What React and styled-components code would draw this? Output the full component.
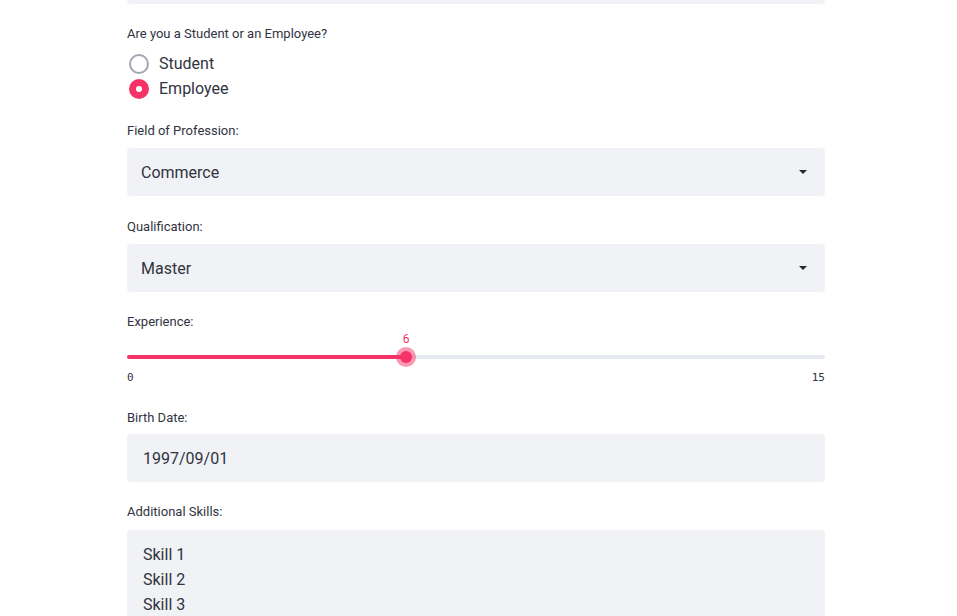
import React from "react";
import styled, { createGlobalStyle } from "styled-components";

const Global = createGlobalStyle`
  html, body { margin: 0; padding: 0; background: #ffffff; overflow: hidden; }
  body { font-family: Roboto, "Noto Sans", "Liberation Sans", sans-serif; color: #31333f; }
  * { box-sizing: border-box; }
`;

const Column = styled.main`
  width: 698px;
  margin-left: 127px;
  display: flex;
  flex-direction: column;
`;

const TopField = styled.div`
  height: 48px;
  margin-top: -44px;
  margin-bottom: 22px;
  background: #f0f2f6;
  border-radius: 4px;
`;

const Widget = styled.section`
  display: flex;
  flex-direction: column;
  margin-bottom: ${(p) => p.$gap ?? 22}px;
`;

const Label = styled.label`
  display: block;
  font-size: 13px;
  line-height: 16px;
  height: 16px;
  color: #31333f;
  margin-bottom: ${(p) => p.$mb ?? 9}px;
`;

const RadioGroup = styled.div`
  display: flex;
  flex-direction: column;
`;

const RadioRow = styled.div`
  display: flex;
  align-items: center;
  height: 25px;
  gap: 10px;
  font-size: 16px;
  color: #31333f;
  padding-left: 2px;
`;

const RadioDot = styled.span`
  width: 20px;
  height: 20px;
  border-radius: 50%;
  flex: none;
  display: flex;
  align-items: center;
  justify-content: center;
  border: ${(p) => (p.$checked ? "none" : "2px solid #a3a6b1")};
  background: ${(p) => (p.$checked ? "#f63366" : "#ffffff")};
  &::after {
    content: "";
    display: ${(p) => (p.$checked ? "block" : "none")};
    width: 6px;
    height: 6px;
    border-radius: 50%;
    background: #ffffff;
  }
`;

const SelectBox = styled.div`
  height: 48px;
  background: #f0f2f6;
  border-radius: 4px;
  display: flex;
  align-items: center;
  justify-content: space-between;
  padding: 0 18px 0 14px;
  font-size: 16px;
  color: #31333f;
`;

const Caret = styled.span`
  width: 0;
  height: 0;
  border-left: 4px solid transparent;
  border-right: 4px solid transparent;
  border-top: 4px solid #262730;
`;

const TextInput = styled.input`
  height: 48px;
  background: #f0f2f6;
  border: none;
  border-radius: 4px;
  padding: 0 16px;
  font-family: Roboto, "Noto Sans", sans-serif;
  font-size: 16px;
  color: #31333f;
  outline: none;
`;

const TextArea = styled.textarea`
  height: 140px;
  background: #f0f2f6;
  border: none;
  border-radius: 4px;
  padding: 12px 16px;
  font-family: Roboto, "Noto Sans", sans-serif;
  font-size: 16px;
  line-height: 25px;
  color: #31333f;
  resize: none;
  outline: none;
  overflow: hidden;
`;

const SliderValueRow = styled.div`
  position: relative;
  height: 14px;
  margin-bottom: 1px;
`;

const SliderValue = styled.span`
  position: absolute;
  top: 0;
  transform: translateX(-50%);
  font-size: 12px;
  line-height: 14px;
  color: #f63366;
`;

const TrackArea = styled.div`
  position: relative;
  height: 20px;
  display: flex;
  align-items: center;
`;

const Track = styled.div`
  width: 100%;
  height: 4px;
  border-radius: 2px;
  background: #e6e9ef;
  overflow: hidden;
`;

const Fill = styled.div`
  height: 100%;
  background: #f63366;
`;

const Thumb = styled.span`
  position: absolute;
  top: 50%;
  width: 12px;
  height: 12px;
  border-radius: 50%;
  background: #f63366;
  transform: translate(-50%, -50%);
  box-shadow: 0 0 0 4px rgba(246, 51, 102, 0.5);
`;

const TickRow = styled.div`
  display: flex;
  justify-content: space-between;
  margin-top: 4px;
  font-family: "DejaVu Sans Mono", "Liberation Mono", monospace;
  font-size: 11px;
  line-height: 14px;
  color: #31333f;
`;

function Slider({ label, min, max, value }) {
  const pct = ((value - min) / (max - min)) * 100;
  return (
    <Widget $gap={25}>
      <Label $mb={2}>{label}</Label>
      <SliderValueRow>
        <SliderValue style={{ left: `${pct}%` }}>{value}</SliderValue>
      </SliderValueRow>
      <TrackArea>
        <Track>
          <Fill style={{ width: `${pct}%` }} />
        </Track>
        <Thumb style={{ left: `${pct}%` }} />
      </TrackArea>
      <TickRow>
        <span>{min}</span>
        <span>{max}</span>
      </TickRow>
    </Widget>
  );
}

function Select({ label, value, gap }) {
  return (
    <Widget $gap={gap}>
      <Label>{label}</Label>
      <SelectBox>
        <span>{value}</span>
        <Caret />
      </SelectBox>
    </Widget>
  );
}

export default function App() {
  return (
    <>
      <Global />
      <Column>
        <TopField />
        <Widget $gap={22}>
          <Label>Are you a Student or an Employee?</Label>
          <RadioGroup>
            <RadioRow>
              <RadioDot />
              <span>Student</span>
            </RadioRow>
            <RadioRow>
              <RadioDot $checked />
              <span>Employee</span>
            </RadioRow>
          </RadioGroup>
        </Widget>
        <Select label="Field of Profession:" value="Commerce" gap={23} />
        <Select label="Qualification:" value="Master" />
        <Slider label="Experience:" min={0} max={15} value={6} />
        <Widget $gap={22}>
          <Label $mb={8}>Birth Date:</Label>
          <TextInput defaultValue="1997/09/01" />
        </Widget>
        <Widget>
          <Label $mb={10}>Additional Skills:</Label>
          <TextArea defaultValue={"Skill 1\nSkill 2\nSkill 3"} />
        </Widget>
      </Column>
    </>
  );
}
